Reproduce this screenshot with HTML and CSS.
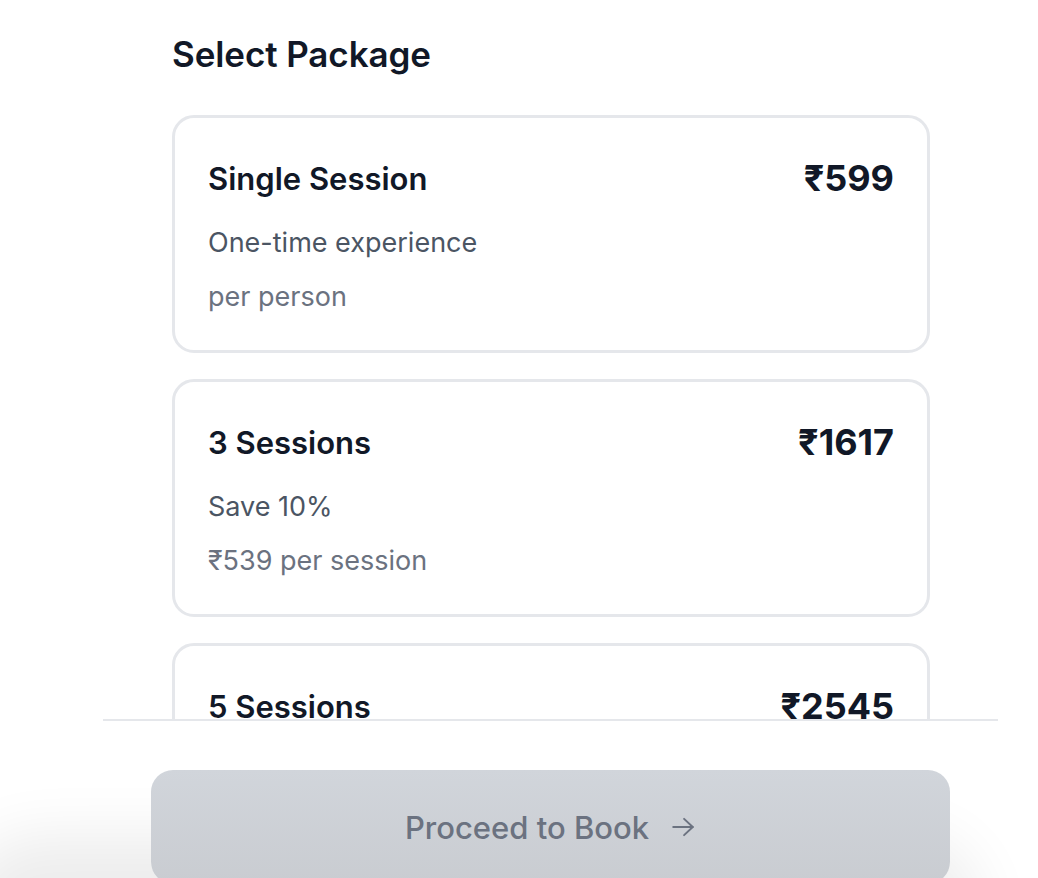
FILE: index.html
```html
<!DOCTYPE html>
<html lang="en">
<head>
<meta charset="utf-8">
<title>Select Package</title>
<link rel="stylesheet" href="styles.css">
</head>
<body>
<div class="sheet">
  <div class="scroll">
    <h2 class="heading">Select Package</h2>
    <div class="packages">
      <div class="card">
        <div class="card-head">
          <span class="card-title">Single Session</span>
          <span class="card-price">₹599</span>
        </div>
        <div class="card-desc">One-time experience</div>
        <div class="card-sub">per person</div>
      </div>
      <div class="card">
        <div class="card-head">
          <span class="card-title">3 Sessions</span>
          <span class="card-price">₹1617</span>
        </div>
        <div class="card-desc">Save 10%</div>
        <div class="card-sub">₹539 per session</div>
      </div>
      <div class="card">
        <div class="card-head">
          <span class="card-title">5 Sessions</span>
          <span class="card-price">₹2545</span>
        </div>
        <div class="card-desc">Save 15%</div>
        <div class="card-sub">₹509 per session</div>
      </div>
    </div>
  </div>
  <div class="footer">
    <button class="cta" type="button">
      <span>Proceed to Book</span>
      <svg class="cta-arrow" width="26" height="26" viewBox="0 0 24 24" fill="none" stroke="currentColor" stroke-width="1.8" stroke-linecap="round" stroke-linejoin="round"><path d="M3 12h18"/><path d="M13 4.5l8 7.5-8 7.5"/></svg>
    </button>
  </div>
</div>
</body>
</html>
```

FILE: styles.css
```css
* { box-sizing: border-box; }
html, body { margin: 0; padding: 0; background: #ffffff; }
body {
  font-family: Inter, "Noto Sans", "Liberation Sans", sans-serif;
  color: #111827;
  overflow: hidden;
  height: 878px;
}
.sheet {
  margin-left: 103px;
  width: 895px;
}
.scroll {
  height: 719px;
  overflow: hidden;
  padding: 30px 68px 0 69px;
}
.heading {
  margin: 0 0 37px 0;
  font-size: 35px;
  line-height: 48px;
  font-weight: 600;
  color: #111827;
  letter-spacing: -0.1px;
}
.packages {
  display: flex;
  flex-direction: column;
  gap: 26px;
}
.card {
  border: 3px solid #e5e7eb;
  border-radius: 22px;
  padding: 36px 33px 35px 33px;
  background: #fff;
}
.card-head {
  display: flex;
  justify-content: space-between;
  align-items: center;
  height: 48px;
}
.card-title {
  font-size: 31px;
  font-weight: 600;
  color: #111827;
}
.card-price {
  font-size: 36px;
  font-weight: 700;
  color: #111827;
}
.card-desc {
  margin-top: 23px;
  font-size: 27px;
  line-height: 36px;
  color: #4b5563;
}
.card-sub {
  margin-top: 18px;
  font-size: 27px;
  line-height: 36px;
  color: #6b7280;
}
.footer {
  border-top: 2px solid #e5e7eb;
  padding: 49px 48px 0 48px;
  background: #fff;
}
.cta {
  width: 100%;
  height: 114px;
  border: none;
  border-radius: 22px;
  background: linear-gradient(180deg, #d1d5db 0%, #c9ccd1 100%);
  box-shadow: -80px 175px 60px 110px rgba(0, 0, 0, 0.075);
  display: flex;
  align-items: center;
  justify-content: center;
  gap: 21px;
  font-family: Inter, "Noto Sans", "Liberation Sans", sans-serif;
  font-size: 31px;
  font-weight: 500;
  color: #6b7280;
  padding: 0;
}
.cta-arrow { display: block; }
```
